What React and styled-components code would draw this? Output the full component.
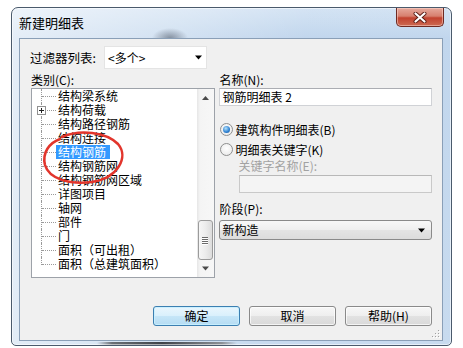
import styled, { createGlobalStyle } from 'styled-components';

const GlobalStyle = createGlobalStyle`
  html, body {
    margin: 0;
    padding: 0;
    background: #fff;
  }
  body {
    font-family: "Noto Sans CJK SC", "Liberation Sans", sans-serif;
    font-size: 12px;
    color: #000;
  }
`;

const Page = styled.div`
  width: 463px;
  height: 348px;
  padding: 7px 0 0 11px;
  box-sizing: border-box;
`;

const Window = styled.div`
  width: 441px;
  height: 339px;
  box-sizing: border-box;
  border: 1px solid #4a5a6c;
  border-radius: 7px 7px 5px 5px;
  box-shadow: inset 0 0 0 1px rgba(255, 255, 255, 0.55);
  padding: 0 8px 4px 7px;
  display: flex;
  flex-direction: column;
  background:
    linear-gradient(to right, transparent 85px, #6b6f75 100px, #3e4248 150px, #8c9096 210px, transparent 225px) left bottom / 100% 3px no-repeat,
    radial-gradient(ellipse 18px 10px at 158px 30px, rgba(70, 80, 95, 0.55), transparent),
    linear-gradient(100deg, rgba(255, 255, 255, 0.6) 0%, rgba(255, 255, 255, 0.3) 35%, rgba(255, 255, 255, 0.05) 60%),
    linear-gradient(to bottom, #d2e2f3, #bed4ec 30px, #c5d9ee);
`;

const TitleBar = styled.div`
  height: 30px;
  display: flex;
  align-items: flex-start;
  justify-content: space-between;
`;

const Title = styled.span`
  font-size: 13px;
  line-height: 30px;
`;

const CloseButton = styled.div`
  width: 48px;
  height: 19px;
  margin-right: -1px;
  box-sizing: border-box;
  border: 1px solid #6e2a22;
  border-top: none;
  border-radius: 0 0 5px 5px;
  background: linear-gradient(to bottom, #e6a99c 0%, #d7806f 45%, #c2422f 55%, #cc6a52 100%);
  box-shadow: inset 0 0 0 1px rgba(255, 220, 210, 0.5);
  display: flex;
  align-items: center;
  justify-content: center;
`;

const Client = styled.div`
  position: relative;
  flex: 1;
  background: #f0f0f0;
  border: 1px solid #8a9fb7;
  padding: 7px 10px 0 10px;
  display: flex;
  flex-direction: column;
`;

const FilterRow = styled.div`
  display: flex;
  align-items: center;
  height: 23px;
`;

const FilterLabel = styled.span`
  width: 74px;
  font-size: 12.5px;
  line-height: 14px;
`;

const FilterSelect = styled.div`
  width: 103px;
  height: 23px;
  box-sizing: border-box;
  background: #fff;
  border: 1px solid #e4e4e4;
  display: flex;
  align-items: center;
  justify-content: space-between;
  padding: 0 4px 0 3px;
  line-height: 14px;
`;

const Columns = styled.div`
  display: flex;
  gap: 4px;
  margin-top: 4px;
  padding-left: 1px;
`;

const Column = styled.div`
  width: ${(p) => p.$width}px;
  display: flex;
  flex-direction: column;
`;

const Label = styled.span`
  height: 14px;
  line-height: 14px;
  margin-top: ${(p) => p.$top || 0}px;
  padding-left: ${(p) => p.$indent || 0}px;
  color: ${(p) => (p.$disabled ? '#a2a2a2' : '#000')};
  white-space: nowrap;
`;

const ListBox = styled.div`
  position: relative;
  margin-top: 1px;
  height: 190px;
  box-sizing: border-box;
  border: 1px solid #9da2a9;
  background: #fff;
  display: flex;
`;

const Tree = styled.div`
  flex: 1;
  display: flex;
  flex-direction: column;
`;

const Row = styled.div`
  height: 14px;
  display: flex;
  align-items: center;
  padding-left: 9px;
`;

const Connector = styled.span`
  position: relative;
  width: 15px;
  height: 14px;
  flex: none;

  &::before {
    content: '';
    position: absolute;
    left: 0;
    top: 0;
    height: ${(p) => (p.$last ? '8px' : '14px')};
    border-left: 1px dotted #9a9a9a;
  }

  &::after {
    content: '';
    position: absolute;
    left: 1px;
    top: 7px;
    width: 14px;
    border-top: 1px dotted #9a9a9a;
  }
`;

const Expander = styled.svg`
  position: absolute;
  left: -4px;
  top: 3px;
  z-index: 1;
`;

const ItemText = styled.span`
  height: 14px;
  line-height: 14px;
  padding: 0 4px 0 2px;
  white-space: nowrap;
  background: ${(p) => (p.$selected ? '#3399ff' : 'transparent')};
  color: ${(p) => (p.$selected ? '#fff' : '#000')};
`;

const ScrollBar = styled.div`
  width: 17px;
  flex: none;
  display: flex;
  flex-direction: column;
  background: linear-gradient(to right, #e6e6e6, #f4f4f4 3px, #f7f7f7);
`;

const ScrollButton = styled.div`
  height: 17px;
  display: flex;
  align-items: center;
  justify-content: center;
`;

const Track = styled.div`
  flex: 1;
  display: flex;
  flex-direction: column;
  justify-content: flex-end;
`;

const Thumb = styled.div`
  height: 40px;
  margin: 0 1px;
  box-sizing: border-box;
  border: 1px solid #9b9b9b;
  border-radius: 3px;
  background: linear-gradient(to right, #f6f6f6, #ececec 50%, #dcdcdc);
  display: flex;
  flex-direction: column;
  align-items: center;
  justify-content: center;
  gap: 1px;
`;

const Grip = styled.span`
  width: 6px;
  height: 1px;
  background: #6a6a6a;
  box-shadow: 0 1px 0 #fff;
`;

const TextBox = styled.div`
  height: 18px;
  box-sizing: border-box;
  margin-top: ${(p) => p.$top || 0}px;
  margin-left: ${(p) => p.$indent || 0}px;
  border: 1px solid ${(p) => (p.$disabled ? '#c9c9c9' : '#d0d2d6')};
  border-top-color: ${(p) => (p.$disabled ? '#b8b8b8' : '#abadb3')};
  background: ${(p) => (p.$disabled ? '#f4f4f4' : '#fff')};
  padding-left: 3px;
  line-height: 16px;
  white-space: nowrap;
`;

const RadioRow = styled.div`
  display: flex;
  align-items: center;
  gap: 3px;
  height: 14px;
  margin-top: ${(p) => p.$top}px;
  padding-left: 1px;
`;

const RadioCircle = styled.span`
  width: 13px;
  height: 13px;
  box-sizing: border-box;
  border-radius: 50%;
  border: 1px solid #8e8f8f;
  background: radial-gradient(circle at 50% 40%, #ffffff, #e6e6e6);
  display: flex;
  align-items: center;
  justify-content: center;

  &::after {
    content: '';
    display: ${(p) => (p.$checked ? 'block' : 'none')};
    width: 7px;
    height: 7px;
    border-radius: 50%;
    background: radial-gradient(circle at 40% 35%, #b5e2fb, #2b7fd1 60%, #1b4f8c);
  }
`;

const DropDown = styled.div`
  height: 20px;
  margin-top: 4px;
  box-sizing: border-box;
  border: 1px solid #8a8a8a;
  border-radius: 3px;
  background: linear-gradient(to bottom, #f8f8f8, #efefef 50%, #e4e4e4 50%, #dcdcdc);
  display: flex;
  align-items: center;
  justify-content: space-between;
  padding: 0 6px 0 3px;
  line-height: 14px;
`;

const ButtonRow = styled.div`
  display: flex;
  justify-content: flex-end;
  gap: 9px;
  margin-top: 28px;
`;

const Button = styled.div`
  width: 87px;
  height: 20px;
  box-sizing: border-box;
  border-radius: 3px;
  border: 1px solid ${(p) => (p.$default ? '#3c7fb1' : '#8a8a8a')};
  background: ${(p) =>
    p.$default
      ? 'linear-gradient(to bottom, #eaf6fd, #d9f0fc 50%, #c6e6f8 50%, #b5dcf3)'
      : 'linear-gradient(to bottom, #f7f7f7, #eeeeee 50%, #e2e2e2 50%, #d9d9d9)'};
  box-shadow: inset 0 0 0 1px ${(p) => (p.$default ? 'rgba(200, 240, 255, 0.9)' : 'rgba(255, 255, 255, 0.7)')};
  display: flex;
  align-items: center;
  justify-content: center;
  line-height: 14px;
`;

const SizeGrip = styled.svg`
  position: absolute;
  right: 1px;
  bottom: 1px;
`;

const Annotation = styled.svg`
  position: absolute;
  left: 10px;
  top: 41px;
  overflow: visible;
  pointer-events: none;
`;

const Arrow = ({ size = 7, color = '#000' }) => (
  <svg width={size} height={Math.ceil(size / 2) + 1} viewBox="0 0 7 4">
    <path d="M0 0 H7 L3.5 4 Z" fill={color} />
  </svg>
);

const items = [
  '结构梁系统',
  '结构荷载',
  '结构路径钢筋',
  '结构连接',
  '结构钢筋',
  '结构钢筋网',
  '结构钢筋网区域',
  '详图项目',
  '轴网',
  '部件',
  '门',
  '面积（可出租）',
  '面积（总建筑面积）',
];

export default function App() {
  return (
    <Page>
      <GlobalStyle />
      <Window>
        <TitleBar>
          <Title>新建明细表</Title>
          <CloseButton>
            <svg width="14" height="11" viewBox="0 0 14 11">
              <path d="M2.5 1.5 L11.5 9.5 M11.5 1.5 L2.5 9.5" stroke="#5a1d14" strokeWidth="4" strokeLinecap="round" />
              <path d="M2.5 1.5 L11.5 9.5 M11.5 1.5 L2.5 9.5" stroke="#fff" strokeWidth="2.2" strokeLinecap="round" />
            </svg>
          </CloseButton>
        </TitleBar>
        <Client>
          <FilterRow>
            <FilterLabel>过滤器列表:</FilterLabel>
            <FilterSelect>
              <span>&lt;多个&gt;</span>
              <Arrow />
            </FilterSelect>
          </FilterRow>
          <Columns>
            <Column $width={184}>
              <Label>类别(C):</Label>
              <ListBox>
                <Tree>
                  {items.map((item, i) => (
                    <Row key={item}>
                      <Connector $last={i === items.length - 1}>
                        {i === 1 && (
                          <Expander width="9" height="9" viewBox="0 0 9 9">
                            <rect x="0.5" y="0.5" width="8" height="8" fill="#fff" stroke="#919191" />
                            <path d="M2 4.5 H7 M4.5 2 V7" stroke="#222" />
                          </Expander>
                        )}
                      </Connector>
                      <ItemText $selected={i === 4}>{item}</ItemText>
                    </Row>
                  ))}
                </Tree>
                <ScrollBar>
                  <ScrollButton>
                    <svg width="7" height="4" viewBox="0 0 7 4">
                      <path d="M0 4 H7 L3.5 0 Z" fill="#4a4a4a" />
                    </svg>
                  </ScrollButton>
                  <Track>
                    <Thumb>
                      <Grip />
                      <Grip />
                      <Grip />
                      <Grip />
                    </Thumb>
                  </Track>
                  <ScrollButton>
                    <Arrow color="#4a4a4a" />
                  </ScrollButton>
                </ScrollBar>
                <Annotation width="84" height="56" viewBox="0 0 84 56">
                  <path
                    d="M20 7 C38 -1 64 2 76 14 C87 27 76 48 50 52 C28 55 7 49 3 35 C0 23 7 13 18 9"
                    fill="none"
                    stroke="#e2352c"
                    strokeWidth="2.6"
                    strokeLinecap="round"
                  />
                </Annotation>
              </ListBox>
            </Column>
            <Column $width={214}>
              <Label $indent={1}>名称(N):</Label>
              <TextBox $top={1}>钢筋明细表 2</TextBox>
              <RadioRow $top={16}>
                <RadioCircle $checked />
                <span>建筑构件明细表(B)</span>
              </RadioRow>
              <RadioRow $top={6}>
                <RadioCircle />
                <span>明细表关键字(K)</span>
              </RadioRow>
              <Label $top={3} $indent={20} $disabled>关键字名称(E):</Label>
              <TextBox $top={2} $indent={20} $disabled />
              <Label $top={9} $indent={1}>阶段(P):</Label>
              <DropDown>
                <span>新构造</span>
                <Arrow />
              </DropDown>
            </Column>
          </Columns>
          <ButtonRow>
            <Button $default>确定</Button>
            <Button>取消</Button>
            <Button>帮助(H)</Button>
          </ButtonRow>
          <SizeGrip width="10" height="10" viewBox="0 0 10 10">
            {[
              [8, 2],
              [5, 5],
              [8, 5],
              [2, 8],
              [5, 8],
              [8, 8],
            ].map(([x, y]) => (
              <g key={`${x}-${y}`}>
                <rect x={x} y={y} width="1" height="1" fill="#fff" />
                <rect x={x - 1} y={y - 1} width="1" height="1" fill="#a0a0a0" />
              </g>
            ))}
          </SizeGrip>
        </Client>
      </Window>
    </Page>
  );
}
